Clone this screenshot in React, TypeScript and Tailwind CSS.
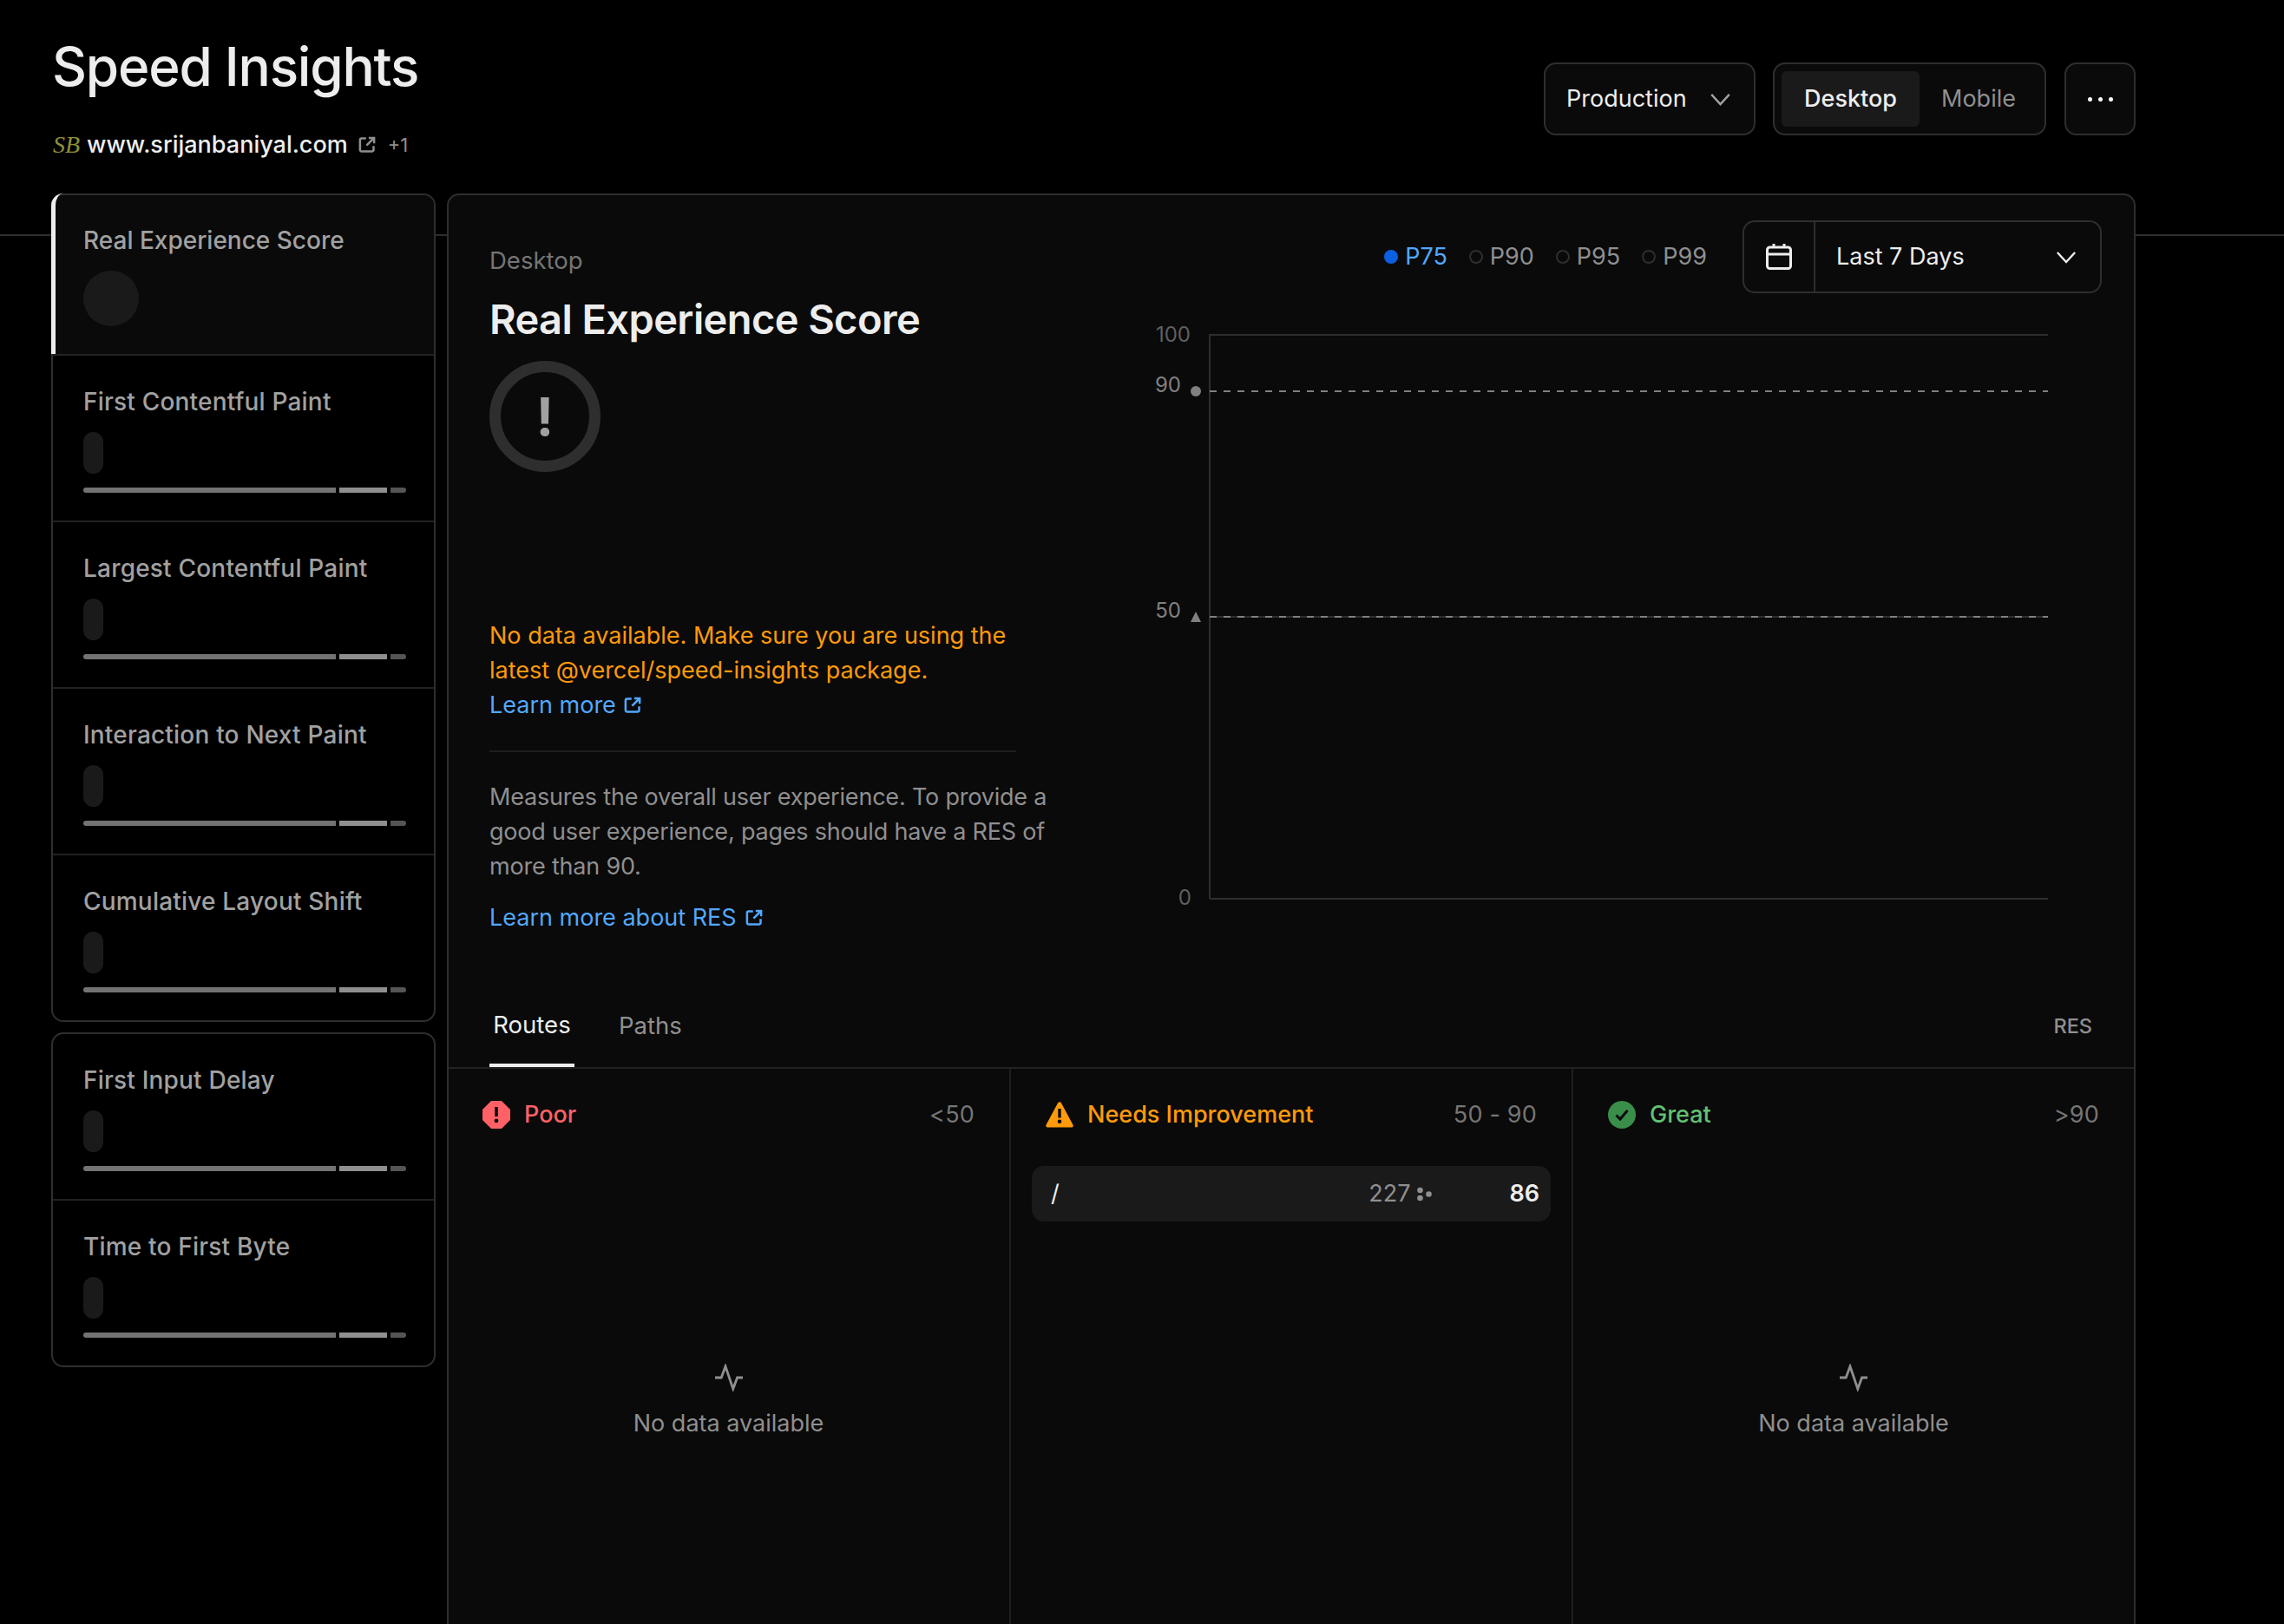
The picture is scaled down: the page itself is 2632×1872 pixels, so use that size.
const PRIMARY_METRICS = [
  "First Contentful Paint",
  "Largest Contentful Paint",
  "Interaction to Next Paint",
  "Cumulative Layout Shift",
];
const OTHER_METRICS = ["First Input Delay", "Time to First Byte"];

function ExternalIcon({ className }: { className: string }) {
  return (
    <svg viewBox="0 0 16 16" fill="none" stroke="currentColor" strokeWidth="2" className={className}>
      <path d="M7 2H3a1.500 1.500 0 0 0-1.500 1.500v9A1.500 1.500 0 0 0 3 14h9.500a1.500 1.500 0 0 0 1.500-1.500V9" />
      <path d="M7.500 8.500 14 2M9.500 1.500h5v5" />
    </svg>
  );
}

function Chevron({ className }: { className: string }) {
  return (
    <svg viewBox="0 0 26 16" fill="none" stroke="currentColor" strokeWidth="2.6" className={className}>
      <path d="M2 2l11 12L24 2" />
    </svg>
  );
}

function Pulse() {
  return (
    <svg viewBox="0 0 16 16" fill="none" stroke="#8f8f8f" strokeWidth="1.4" className="h-8 w-8">
      <path d="M0 8h3.600L6 1.500l4.400 13L12.800 8H16" />
    </svg>
  );
}

function MetricRow({ title, last }: { title: string; last?: boolean }) {
  return (
    <div className={`pt-[33px] pr-[31px] pb-8 pl-[35px] ${last ? "" : "border-b-2 border-[#222222]"}`}>
      <div className="h-10 text-[28px] leading-10 font-medium tracking-[0.2px] text-[#a1a1a1]">{title}</div>
      <div className="mt-[15px] h-12 w-[23px] rounded-full bg-[#1a1a1a]" />
      <div className="mt-4 flex h-[6px] gap-1">
        <div className="w-[291px] rounded-l-full bg-[#737373]" />
        <div className="w-[55px] bg-[#8f8f8f]" />
        <div className="w-[18px] rounded-r-full bg-[#555555]" />
      </div>
    </div>
  );
}

function Percentile({ label, active }: { label: string; active?: boolean }) {
  return (
    <div className="flex items-center gap-2">
      <span
        className={`h-4 w-4 rounded-full ${active ? "bg-[#0a60e0]" : "border-2 border-[#2e2e2e]"}`}
      />
      <span className={`text-[27px] leading-10 ${active ? "text-[#52a8ff]" : "text-[#8f8f8f]"}`}>
        {label}
      </span>
    </div>
  );
}

function Chart() {
  const text = "text-[24px]";
  return (
    <svg width="1045" height="680" viewBox="0 0 1045 680" className="mt-[32px] mr-[94px] ml-auto">
      <path d="M74 16H1040M74 15V666M74 666H1040M74 341H1040" stroke="#2e2e2e" strokeWidth="2" fill="none" />
      <path d="M74 81H1040M74 341H1040" stroke="#808080" strokeWidth="2" strokeDasharray="8 8" fill="none" />
      <text x="52" y="24" textAnchor="end" fill="#5f5f5f" className={text}>100</text>
      <text x="41" y="82" textAnchor="end" fill="#808080" className={text}>90</text>
      <text x="41" y="342" textAnchor="end" fill="#808080" className={text}>50</text>
      <text x="53" y="673" textAnchor="end" fill="#5f5f5f" className={text}>0</text>
      <circle cx="58" cy="81" r="6" fill="#808080" />
      <path d="M52 347h12l-6-12z" fill="#808080" />
    </svg>
  );
}

function Empty() {
  return (
    <div className="mt-[267px] flex flex-col items-center gap-[17px]">
      <Pulse />
      <div className="text-[27px] leading-10 text-[#8f8f8f]">No data available</div>
    </div>
  );
}

function BucketHead({
  icon,
  label,
  range,
  color,
}: {
  icon: React.ReactNode;
  label: string;
  range: string;
  color: string;
}) {
  return (
    <div className="flex h-10 items-center justify-between px-10">
      <div className="flex items-center gap-4">
        {icon}
        <span className={`text-[27px] font-medium ${color}`}>{label}</span>
      </div>
      <span className="text-[27px] tracking-[0.2px] text-[#757575]">{range}</span>
    </div>
  );
}

export default function App() {
  return (
    <div className="relative h-[1872px] overflow-hidden bg-black text-white [font-family:Inter,sans-serif]">
      <div className="absolute top-[270px] right-0 left-0 h-[2px] bg-[#2e2e2e]" />

      <div className="relative ml-[59px] w-[2402px]">
        <header className="flex h-[223px] justify-between">
          <div className="pt-[41px]">
            <h1 className="ml-[1px] h-[72px] text-[62px] leading-[72px] font-medium tracking-[-1.2px] text-[#ededed]">
              Speed Insights
            </h1>
            <div className="mt-[34px] flex h-10 items-center">
              <span className="ml-[2px] w-[39px] text-[28px] text-[#8f8f3a] italic [font-family:'Liberation_Serif',serif]">
                SB
              </span>
              <span className="text-[27px] font-medium text-[#ededed]">www.srijanbaniyal.com</span>
              <ExternalIcon className="ml-3 h-5 w-5 text-[#8f8f8f]" />
              <span className="ml-[14px] text-[22px] text-[#8f8f8f]">+1</span>
            </div>
          </div>

          <div className="mt-[72px] flex h-[84px]">
            <div className="flex w-[244px] items-center justify-between rounded-[14px] border-2 border-[#2e2e2e] bg-[#0a0a0a] pr-[26px] pl-[24px]">
              <span className="text-[27px] text-[#ededed]">Production</span>
              <Chevron className="h-[15px] w-[25px] text-[#a1a1a1]" />
            </div>
            <div className="ml-5 flex w-[315px] rounded-[14px] border-2 border-[#2e2e2e] bg-[#0a0a0a] p-2">
              <div className="flex w-[159px] items-center justify-center rounded-[6px] bg-[#1a1a1a] text-[27px] font-medium text-[#ededed]">
                Desktop
              </div>
              <div className="flex w-[136px] items-center justify-center text-[27px] text-[#8f8f8f]">
                Mobile
              </div>
            </div>
            <div className="ml-[21px] flex w-[82px] items-center justify-center gap-[7px] rounded-[14px] border-2 border-[#2e2e2e] bg-[#0a0a0a]">
              <span className="h-[5px] w-[5px] rounded-full bg-white" />
              <span className="h-[5px] w-[5px] rounded-full bg-white" />
              <span className="h-[5px] w-[5px] rounded-full bg-white" />
            </div>
          </div>
        </header>

        <div className="flex gap-[13px]">
          <aside className="flex w-[443px] shrink-0 flex-col gap-3">
            <div className="rounded-[14px] border-2 border-[#2e2e2e]">
              <div className="relative rounded-t-[12px] border-b-2 border-[#222222] bg-[#0a0a0a] px-[35px] pt-8 pb-8">
                <div className="absolute -top-[2px] -left-[2px] bottom-0 w-[14px] rounded-tl-[14px] border-l-[5px] border-[#ededed]" />
                <div className="h-10 text-[28px] leading-10 font-medium text-[#a1a1a1]">
                  Real Experience Score
                </div>
                <div className="mt-[15px] h-16 w-16 rounded-full bg-[#1a1a1a]" />
              </div>
              {PRIMARY_METRICS.map((m, i) => (
                <MetricRow key={m} title={m} last={i === PRIMARY_METRICS.length - 1} />
              ))}
            </div>
            <div className="rounded-[14px] border-2 border-[#2e2e2e]">
              {OTHER_METRICS.map((m, i) => (
                <MetricRow key={m} title={m} last={i === OTHER_METRICS.length - 1} />
              ))}
            </div>
          </aside>

          <main className="flex h-[1700px] flex-1 flex-col rounded-t-[14px] border-x-2 border-t-2 border-[#2e2e2e] bg-[#0a0a0a]">
            <section className="flex h-[905px] shrink-0">
              <div className="ml-[47px] w-[670px] shrink-0 pt-[55px]">
                <div className="text-[27.5px] leading-10 text-[#757575]">Desktop</div>
                <h2 className="mt-5 h-14 text-[47px] leading-14 font-semibold tracking-[-0.6px] text-[#ededed]">
                  Real Experience Score
                </h2>
                <div className="mt-[20px] flex h-32 w-32 items-center justify-center rounded-full border-[13px] border-[#2e2e2e] text-[60px] font-bold text-[#a1a1a1]">
                  !
                </div>
                <p className="mt-[169px] text-[27px] leading-10 text-[#ff9a0a]">
                  No data available. Make sure you are using the
                  <br />
                  latest @vercel/speed-insights package.
                  <br />
                  <span className="inline-flex items-center gap-[9px] text-[#52a8ff]">
                    Learn more
                    <ExternalIcon className="h-5 w-5" />
                  </span>
                </p>
                <div className="mt-8 h-[2px] w-[607px] bg-[#1f1f1f]" />
                <p className="mt-[32px] text-[27px] leading-10 tracking-[-0.2px] text-[#8f8f8f]">
                  Measures the overall user experience. To provide a
                  <br />
                  good user experience, pages should have a RES of
                  <br />
                  more than 90.
                </p>
                <div className="mt-[19px] flex h-10 items-center gap-[10px] text-[27px] text-[#52a8ff]">
                  Learn more about RES
                  <ExternalIcon className="h-5 w-5" />
                </div>
              </div>

              <div className="flex flex-1 flex-col pt-[29px]">
                <div className="flex items-center justify-end gap-[25px] pr-[37px]">
                  <Percentile label="P75" active />
                  <Percentile label="P90" />
                  <Percentile label="P95" />
                  <Percentile label="P99" />
                  <div className="ml-[16px] flex h-[84px] w-[414px] items-center rounded-[14px] border-2 border-[#2e2e2e]">
                    <div className="flex h-full w-[82px] shrink-0 items-center justify-center border-r-2 border-[#2e2e2e]">
                      <svg viewBox="0 0 30 30" fill="none" stroke="#ededed" strokeWidth="3" className="h-[30px] w-[30px]">
                        <rect x="1.500" y="4" width="27" height="24.500" rx="3" />
                        <path d="M1.500 12h27M9 0v4M21 0v4" />
                      </svg>
                    </div>
                    <span className="ml-6 flex-1 text-[27px] text-[#ededed]">Last 7 Days</span>
                    <Chevron className="mr-[27px] h-[15px] w-6 text-[#ededed]" />
                  </div>
                </div>
                <Chart />
              </div>
            </section>

            <div className="flex h-[102px] shrink-0 items-end justify-between border-b-2 border-[#222222] pr-[48px] pl-[47px]">
              <div className="flex gap-[51px]">
                <div className="flex h-[94px] w-[98px] items-center justify-center border-b-4 border-[#ededed] pt-[2px] text-[27.5px] text-[#ededed]">
                  Routes
                </div>
                <div className="flex h-[94px] items-center text-[27.5px] text-[#8f8f8f]">Paths</div>
              </div>
              <div className="flex h-[94px] items-center text-[23.5px] font-medium text-[#8f8f8f]">RES</div>
            </div>

            <div className="grid flex-1 grid-cols-[646px_648px_1fr]">
              <div className="-ml-px pt-[33px]">
                <BucketHead
                  label="Poor"
                  range="<50"
                  color="text-[#ff6166]"
                  icon={
                    <svg viewBox="0 0 32 32" className="h-8 w-8">
                      <path d="M10 0h12l10 10v12L22 32H10L0 22V10z" fill="#ff6166" />
                      <path d="M14.200 7h3.600v11h-3.600zM16 20.500a2.400 2.400 0 1 1 0 4.800 2.400 2.400 0 0 1 0-4.800z" fill="#0a0a0a" />
                    </svg>
                  }
                />
                <Empty />
              </div>
              <div className="border-l-2 border-[#1f1f1f] pt-[33px]">
                <BucketHead
                  label="Needs Improvement"
                  range="50 - 90"
                  color="text-[#ff9a0a]"
                  icon={
                    <svg viewBox="0 0 32 32" className="h-8 w-8">
                      <path d="M14 2.500c1-1.700 3-1.700 4 0l13.400 25c.9 1.700 0 3-2 3H2.600c-2 0-2.900-1.300-2-3z" fill="#ff9a0a" />
                      <path d="M14.300 9h3.400v10.500h-3.400zM16 21.500a2.300 2.300 0 1 1 0 4.600 2.300 2.300 0 0 1 0-4.600z" fill="#0a0a0a" />
                    </svg>
                  }
                />
                <div className="mx-6 mt-[39px] flex h-16 items-center rounded-[14px] bg-[#1a1a1a] pr-[13px] pl-[22px]">
                  <span className="flex-1 text-[27px] text-[#ededed]">/</span>
                  <span className="text-[27px] text-[#8f8f8f]">227</span>
                  <svg viewBox="0 0 17 16" fill="#8f8f8f" className="ml-2 mr-[89px] h-[17px] w-[17px]">
                    <circle cx="3.500" cy="3.500" r="3.300" />
                    <circle cx="3.500" cy="12.500" r="3.300" />
                    <circle cx="13.500" cy="8" r="3.300" />
                  </svg>
                  <span className="text-[27px] font-semibold text-[#ededed]">86</span>
                </div>
              </div>
              <div className="border-l-2 border-[#1f1f1f] pt-[33px]">
                <BucketHead
                  label="Great"
                  range=">90"
                  color="text-[#62c073]"
                  icon={
                    <svg viewBox="0 0 32 32" className="h-8 w-8">
                      <circle cx="16" cy="16" r="16" fill="#398e4a" />
                      <path d="M9.500 16.500l4.500 4.500 8.500-10" fill="none" stroke="#0a0a0a" strokeWidth="3" />
                    </svg>
                  }
                />
                <Empty />
              </div>
            </div>
          </main>
        </div>
      </div>
    </div>
  );
}
